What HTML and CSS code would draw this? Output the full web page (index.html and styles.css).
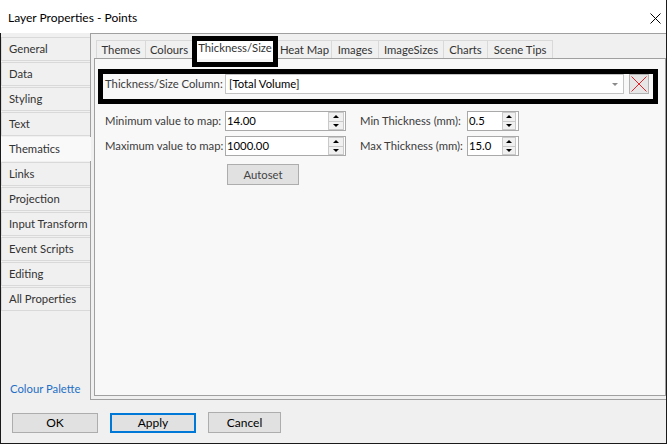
FILE: index.html
```html
<!DOCTYPE html>
<html lang="en">
<head>
<meta charset="utf-8">
<title>Layer Properties - Points</title>
<link rel="stylesheet" href="styles.css">
</head>
<body>
<div class="window">
  <div class="titlebar">
    <span class="title">Layer Properties - Points</span>
    <svg class="close" width="11" height="11" viewBox="0 0 11 11"><path d="M0.5 0.5 L10.5 10.5 M10.5 0.5 L0.5 10.5" stroke="#000" stroke-width="1" fill="none"/></svg>
  </div>
  <div class="body">
    <div class="main">
      <nav class="sidenav">
        <div class="nav-item">General</div>
        <div class="nav-item">Data</div>
        <div class="nav-item">Styling</div>
        <div class="nav-item">Text</div>
        <div class="nav-item active">Thematics</div>
        <div class="nav-item">Links</div>
        <div class="nav-item">Projection</div>
        <div class="nav-item">Input Transform</div>
        <div class="nav-item">Event Scripts</div>
        <div class="nav-item">Editing</div>
        <div class="nav-item">All Properties</div>
        <a class="palette-link">Colour Palette</a>
      </nav>
      <section class="panel">
        <div class="tabs">
          <div class="tab w-themes">Themes</div>
          <div class="tab w-colours">Colours</div>
          <div class="tab w-thick selected">Thickness/Size</div>
          <div class="tab w-heat">Heat Map</div>
          <div class="tab w-images">Images</div>
          <div class="tab w-isizes">ImageSizes</div>
          <div class="tab w-charts">Charts</div>
          <div class="tab w-tips">Scene Tips</div>
        </div>
        <div class="page">
          <div class="column-row">
            <span class="col-label">Thickness/Size Column:</span>
            <div class="combo">
              <span class="combo-value">[Total Volume]</span>
              <span class="combo-arrow"></span>
            </div>
            <div class="clear-btn">
              <svg width="20" height="20" viewBox="0 0 20 20"><path d="M2.5 2.5 L17.5 17.5 M17.5 2.5 L2.5 17.5" stroke="#e0262b" stroke-width="1" fill="none"/></svg>
            </div>
          </div>
          <div class="field-row">
            <span class="f-label l-wide">Minimum value to map:</span>
            <div class="spin-input s-wide">
              <span class="spin-value">14.00</span>
              <div class="spinner"><span class="sp-up"><i class="up"></i></span><span class="sp-down"><i class="down"></i></span></div>
            </div>
            <span class="f-label l-narrow">Min Thickness (mm):</span>
            <div class="spin-input s-narrow">
              <span class="spin-value">0.5</span>
              <div class="spinner sm"><span class="sp-up"><i class="up"></i></span><span class="sp-down"><i class="down"></i></span></div>
            </div>
          </div>
          <div class="field-row second">
            <span class="f-label l-wide">Maximum value to map:</span>
            <div class="spin-input s-wide">
              <span class="spin-value">1000.00</span>
              <div class="spinner"><span class="sp-up"><i class="up"></i></span><span class="sp-down"><i class="down"></i></span></div>
            </div>
            <span class="f-label l-narrow">Max Thickness (mm):</span>
            <div class="spin-input s-narrow">
              <span class="spin-value">15.0</span>
              <div class="spinner sm"><span class="sp-up"><i class="up"></i></span><span class="sp-down"><i class="down"></i></span></div>
            </div>
          </div>
          <div class="autoset-row"><div class="btn autoset">Autoset</div></div>
        </div>
      </section>
    </div>
    <div class="footer">
      <div class="btn dlg ok">OK</div>
      <div class="btn dlg apply">Apply</div>
      <div class="btn dlg cancel">Cancel</div>
    </div>
  </div>
</div>
</body>
</html>
```

FILE: styles.css
```css
* { box-sizing: border-box; }
html, body { margin: 0; padding: 0; }
body {
  font-family: "Lato", "Noto Sans", sans-serif;
  font-size: 11.3px;
  color: #333;
  background: #fff;
}
.window {
  width: 667px;
  height: 444px;
  display: flex;
  flex-direction: column;
  border-right: 1px solid #1a1a1a;
  border-bottom: 1px solid #1a1a1a;
  background: #fff;
}
.titlebar {
  height: 33px;
  flex: none;
  display: flex;
  align-items: center;
  padding-left: 8px;
  background: #fff;
}
.title { color: #000; font-size: 12px; line-height: 16px; margin-top: 3px; }
.close { margin-left: auto; margin-right: 5px; margin-top: 3px; display: block; }

.body {
  flex: 1;
  display: flex;
  flex-direction: column;
  background: #f0f0f0;
  border-left: 1px solid #1a1a1a;
}
.main {
  height: 367px;
  flex: none;
  display: flex;
}
.sidenav {
  width: 89px;
  flex: none;
  display: flex;
  flex-direction: column;
  padding-top: 4px;
}
.nav-item {
  height: 24px;
  margin-bottom: 1px;
  border: 1px solid #d9d9d9;
  border-right: none;
  background: #f0f0f0;
  padding-left: 7px;
  line-height: 22px;
  color: #333;
  white-space: nowrap;
}
.nav-item.active {
  border: none;
  padding-left: 8px;
  line-height: 24px;
  background: #f9f9f9;
  margin-right: -1px;
  position: relative;
  z-index: 2;
}
.palette-link {
  margin-top: auto;
  padding-left: 9px;
  padding-bottom: 3px;
  line-height: 16px;
  color: #1f6fc5;
  cursor: pointer;
}

.panel {
  flex: 1;
  display: flex;
  flex-direction: column;
  border-top: 1px solid #a0a0a0;
  border-left: 1px solid #a0a0a0;
  border-bottom: 1px solid #a0a0a0;
  padding: 6px 0 3px 3px;
}
.tabs {
  height: 18px;
  flex: none;
  display: flex;
  align-items: flex-end;
  padding-left: 2px;
}
.tab {
  height: 18px;
  margin-right: -1px;
  border: 1px solid #d9d9d9;
  border-bottom: none;
  background: #f0f0f0;
  text-align: center;
  line-height: 18px;
  color: #333;
  white-space: nowrap;
}
.w-themes { width: 50px; }
.w-colours { width: 48px; }
.w-thick { width: 86px; }
.w-heat { width: 55px; }
.w-images { width: 48px; }
.w-isizes { width: 66px; }
.w-charts { width: 45px; }
.w-tips { width: 66px; }
.tab.selected {
  height: 23px;
  margin-bottom: -1px;
  border: none;
  background: #fff;
  padding-top: 3px;
  line-height: 18px;
  position: relative;
  z-index: 2;
}
.tab.selected::after {
  content: "";
  position: absolute;
  left: 0;
  right: 0;
  top: 0;
  bottom: -8px;
  border: 5px solid #000;
}
.page {
  flex: 1;
  border: 1px solid #a0a0a0;
  background: #f8f8f8;
  display: flex;
  flex-direction: column;
}
.column-row {
  margin: 10px 7px 0 3px;
  border: 5px solid #000;
  padding: 0 4px 5px 2px;
  display: flex;
  align-items: flex-start;
  height: 35px;
}
.col-label {
  width: 120px;
  flex: none;
  line-height: 20px;
  color: #3b3b3b;
  white-space: nowrap;
}
.combo {
  flex: 1;
  height: 20px;
  border: 1px solid #c3c3c3;
  background: #fff;
  display: flex;
  align-items: center;
  padding-left: 3px;
}
.combo-value { color: #000; line-height: 18px; }
.combo-arrow {
  margin-left: auto;
  margin-right: 5px;
  width: 0;
  height: 0;
  border-left: 3px solid transparent;
  border-right: 3px solid transparent;
  border-top: 3px solid #8a8a8a;
}
.clear-btn {
  width: 20px;
  height: 20px;
  margin-left: 5px;
  flex: none;
  border: 1px solid #b3b3b3;
  background: #e6e6e6;
  position: relative;
}
.clear-btn svg { position: absolute; left: -1px; top: -1px; }

.field-row {
  margin-top: 7px;
  height: 20px;
  padding-left: 10px;
  display: flex;
  align-items: center;
}
.field-row.second { margin-top: 5px; }
.f-label {
  flex: none;
  color: #3b3b3b;
  white-space: nowrap;
  line-height: 20px;
}
.l-wide { width: 120px; }
.l-narrow { width: 107px; margin-left: 14px; }
.spin-input {
  height: 20px;
  flex: none;
  border: 1px solid #a9a9a9;
  background: #fff;
  display: flex;
  align-items: stretch;
  padding-left: 1px;
}
.s-wide { width: 121px; }
.s-narrow { width: 52px; }
.spin-value { flex: 1; color: #000; line-height: 18px; }
.spinner {
  width: 16px;
  margin-right: 1px;
  display: flex;
  flex-direction: column;
  border: 1px solid #c9c9c9;
  background: #f0f0f0;
}
.spinner.sm { width: 14px; margin-right: 2px; }
.sp-up, .sp-down {
  flex: 1;
  display: flex;
  align-items: center;
  justify-content: center;
}
.sp-up { border-bottom: 1px solid #c9c9c9; }
.up {
  width: 0; height: 0;
  border-left: 3px solid transparent;
  border-right: 3px solid transparent;
  border-bottom: 3px solid #000;
}
.down {
  width: 0; height: 0;
  border-left: 3px solid transparent;
  border-right: 3px solid transparent;
  border-top: 3px solid #000;
}
.btn {
  border: 1px solid #adadad;
  background: #e1e1e1;
  text-align: center;
  color: #000;
}
.autoset-row { margin-top: 8px; padding-left: 132px; }
.autoset { width: 72px; height: 21px; line-height: 19px; color: #444; }

.footer {
  flex: 1;
  display: flex;
  align-items: flex-start;
  padding: 13px 0 0 11px;
  gap: 12px;
}
.dlg { width: 86px; height: 20px; line-height: 18px; font-size: 12px; }
.apply { border: 2px solid #0078d7; line-height: 16px; }
.cancel { width: 73px; height: 21px; margin-top: -1px; line-height: 19px; }
```
